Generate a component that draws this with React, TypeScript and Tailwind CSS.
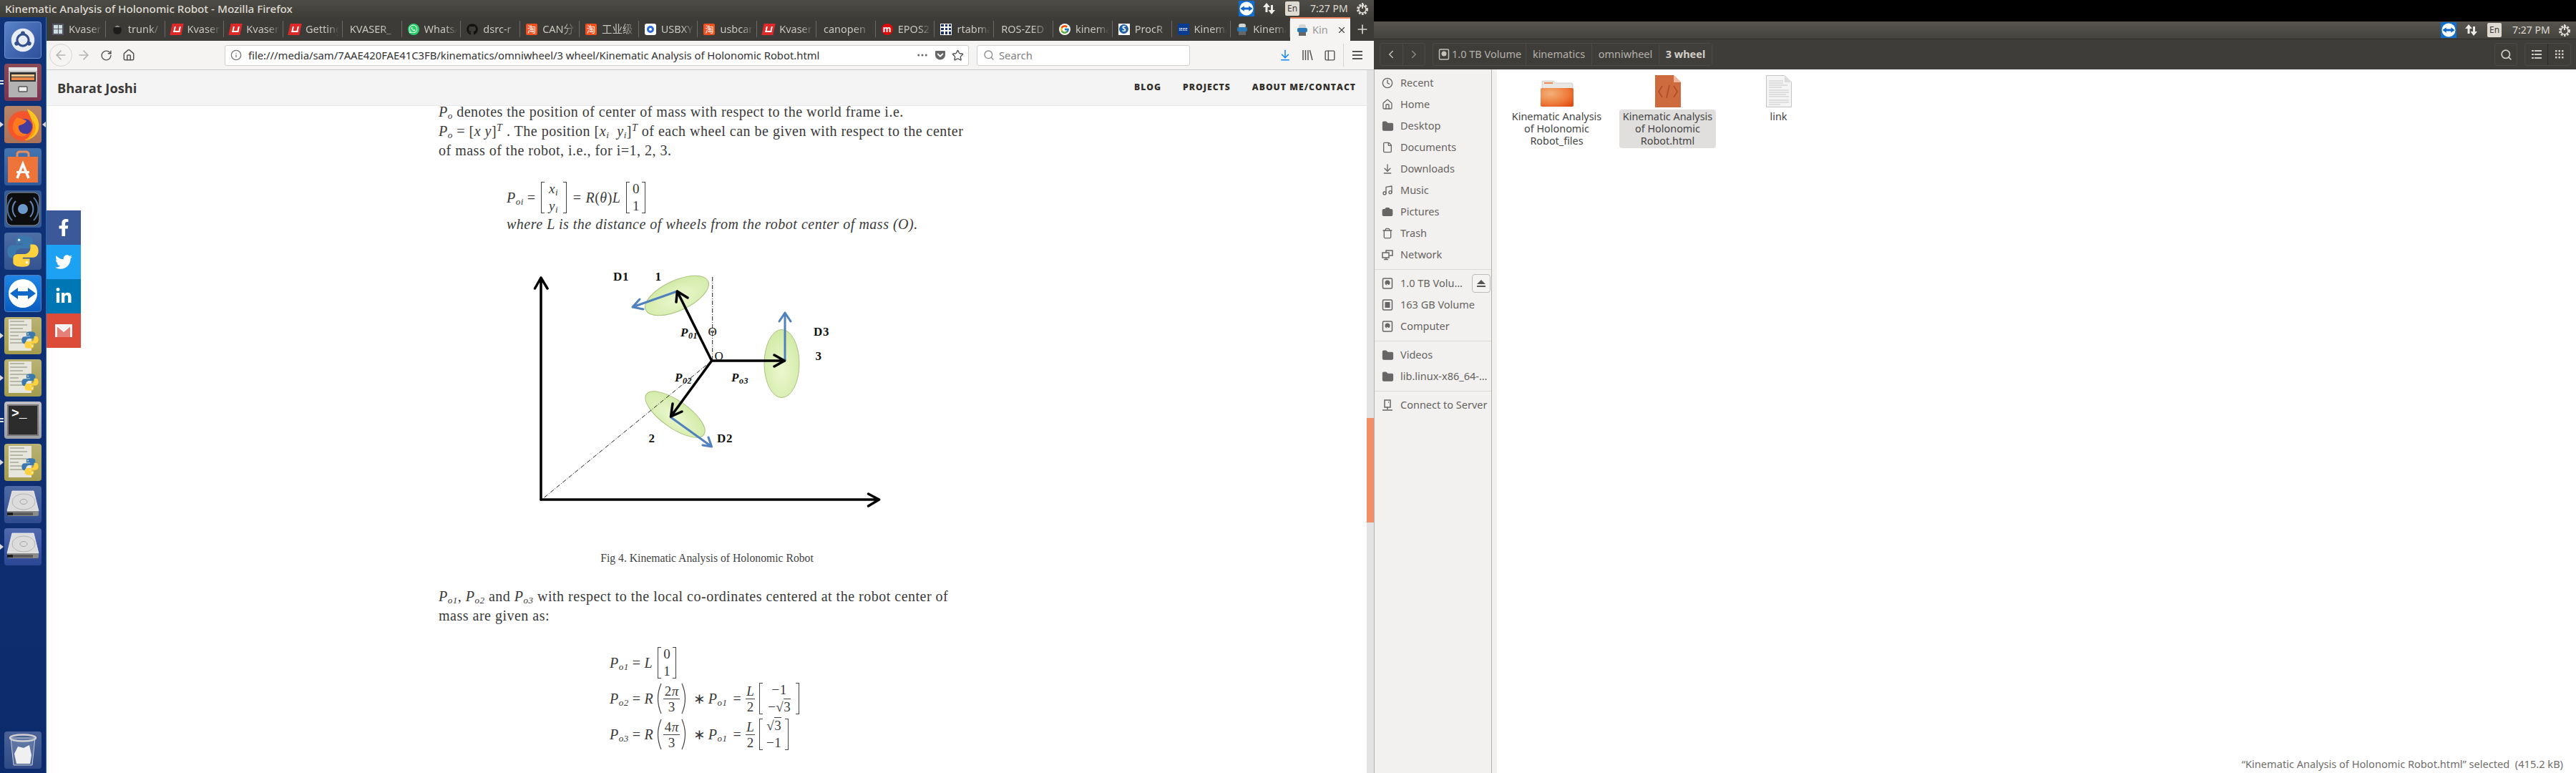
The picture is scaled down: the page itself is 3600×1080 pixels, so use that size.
import React from "react";
import { ArrowLeft, ArrowRight, RotateCw, House, Info, Star, Search, ArrowDownToLine, PanelLeft, Plus, X, Clock, Folder, File, Music, Camera, Trash, ChevronLeft, ChevronRight, Ellipsis } from "lucide-react";
import { FaFacebookF, FaTwitter, FaLinkedinIn, FaWhatsapp, FaGithub, FaGetPocket } from "react-icons/fa";
import { FcGoogle } from "react-icons/fc";

const SANS = "font-['Noto_Sans','Noto_Sans_CJK_SC',sans-serif]";

function Py({ s = 24, shift = false }: { s?: number; shift?: boolean }) {
  const d = "M11.9 2C7.4 2 7.6 4 7.6 5.2V7.2h4.5v.8H5.4C3.4 8 2 9.600 2 12.200s1.300 4.200 3.200 4.200h2v-2.600c0-2 1.700-3.600 3.700-3.600h4.500c1.700 0 2.900-1.300 2.900-2.900V5c0-1.600-1.400-3-5.400-3z";
  return (
    <svg width={s} height={s} viewBox="0 0 24 24" className={shift ? "absolute right-[2px] bottom-[6px]" : ""}>
      <path d={d} fill="#3a78ad" />
      <circle cx="9.500" cy="4.700" r=".8" fill="#e8f0f8" />
      <g transform="rotate(180 12 12)">
        <path d={d} fill="#fdd23e" />
        <circle cx="9.500" cy="4.700" r=".8" fill="#fff" />
      </g>
    </svg>
  );
}

function Tile({ className, children }: { className: string; children?: React.ReactNode }) {
  return <div className={`relative w-[52px] h-[52px] rounded-[4px] flex items-center justify-center overflow-hidden ${className}`}>{children}</div>;
}

function PyDoc() {
  return (
    <Tile className="bg-gradient-to-b from-[#b9b274] to-[#a39c4e]">
      <div className="absolute left-[6px] top-[3px] w-[32px] h-[44px] bg-[#e6e6dc] flex flex-col gap-[3px] p-[2px]">
        <div className="h-[2px] w-[20px] bg-[#b7b7a8]" /><div className="h-[2px] w-[24px] bg-[#b7b7a8]" /><div className="h-[2px] w-[18px] bg-[#b7b7a8]" />
        <div className="h-[2px] w-[24px] bg-[#b7b7a8]" /><div className="h-[2px] w-[12px] bg-[#b7b7a8]" /><div className="h-[2px] w-[22px] bg-[#b7b7a8]" /><div className="h-[2px] w-[26px] bg-[#b7b7a8]" />
      </div>
      <Py s={28} shift />
    </Tile>
  );
}

function Hdd({ className }: { className: string }) {
  return (
    <Tile className={className}>
      <svg width="48" height="42" viewBox="0 0 48 42">
        <path d="M9 2H39L46 30H2z" fill="#dcdcdc" stroke="#f4f4f4" strokeWidth=".8" />
        <path d="M2 30H46V35Q46 37 44 37H4Q2 37 2 35z" fill="#8a8a8a" />
        <rect x="8" y="32" width="30" height="4" fill="#5c5c5c" />
        <rect x="2" y="32" width="8" height="4" fill="#1d1d1d" />
        <ellipse cx="25" cy="17" rx="16" ry="11" fill="none" stroke="#b5b5b5" />
        <ellipse cx="25" cy="17" rx="5" ry="3.500" fill="none" stroke="#a3a3a3" />
      </svg>
    </Tile>
  );
}

const Pip = ({ kind }: { kind: "tri" | "dash" | "none" }) =>
  kind === "tri" ? (
    <div className="w-0 h-0 border-y-[4px] border-y-transparent border-l-[5px] border-l-[#d8d8d8]" />
  ) : kind === "dash" ? (
    <div className="flex flex-col gap-[2px]"><div className="w-[5px] h-[2px] bg-[#e0e0e0]" /><div className="w-[5px] h-[2px] bg-[#e0e0e0]" /></div>
  ) : null;

function LaunchItem({ pip = "none", children, right }: { pip?: "tri" | "dash" | "none"; children: React.ReactNode; right?: boolean }) {
  return (
    <div className="relative h-[52px] w-[65px] flex items-center">
      <div className="w-[6px] flex items-center"><Pip kind={pip} /></div>
      {children}
      {right && <div className="ml-[1px] w-0 h-0 border-y-[4px] border-y-transparent border-r-[5px] border-r-[#d8d8d8]" />}
    </div>
  );
}

function Launcher() {
  return (
    <aside className="w-[65px] shrink-0 bg-gradient-to-b from-[#0f3278] to-[#0c2b6c] border-r border-[#2a6ab8] flex flex-col pt-[6px] pb-[6px] gap-[7px]">
      <LaunchItem>
        <Tile className="bg-gradient-to-br from-[#5a83c8] to-[#2f4f9c] border border-[#6e92cc]">
          <svg width="34" height="40" viewBox="0 0 42 42">
            <circle cx="21" cy="21" r="20" fill="#e9eef6" />
            <circle cx="21" cy="21" r="10" fill="none" stroke="#33508f" strokeWidth="4" />
            <circle cx="21" cy="9" r="3.500" fill="#33508f" /><circle cx="10" cy="27" r="3.500" fill="#33508f" /><circle cx="32" cy="27" r="3.500" fill="#33508f" />
          </svg>
        </Tile>
      </LaunchItem>
      <LaunchItem pip="dash">
        <Tile className="bg-gradient-to-b from-[#8a4a56] to-[#7c3450]">
          <svg width="44" height="46" viewBox="0 0 44 46">
            <rect x="2" y="2" width="40" height="42" fill="#bdbdbd" rx="2" />
            <rect x="2" y="2" width="40" height="5" fill="#e4e4e4" />
            <rect x="4" y="9" width="36" height="13" fill="#333" />
            <rect x="6" y="12" width="32" height="3" fill="#f5c78e" /><rect x="6" y="16" width="32" height="4" fill="#e9894b" />
            <rect x="2" y="22" width="40" height="22" fill="#b2b2b2" />
            <rect x="16" y="29" width="12" height="7" rx="1" fill="#eee" stroke="#555" strokeWidth="1.500" />
          </svg>
        </Tile>
      </LaunchItem>
      <LaunchItem pip="tri" right>
        <Tile className="bg-gradient-to-b from-[#b78568] to-[#ab7258]">
          <svg width="48" height="48" viewBox="0 0 48 48">
            <circle cx="24" cy="26" r="21" fill="#f3552d" />
            <path d="M30 2C42 8 48 18 46 30 44 40 34 46 26 46 36 42 40 34 38 24 37 16 32 10 30 2z" fill="#ffc41f" />
            <path d="M38 18C42 24 44 32 38 39 34 44 30 45 26 46 34 42 40 32 38 18z" fill="#ff9a18" />
            <circle cx="26" cy="27" r="11" fill="#463c9e" />
            <path d="M16 14C20 16 26 16 29 19 26 24 21 24 18 26 17 32 22 38 30 37 24 44 12 40 10 30 9 24 12 18 16 14z" fill="#ff7a1f" />
          </svg>
        </Tile>
      </LaunchItem>
      <LaunchItem>
        <Tile className="bg-gradient-to-b from-[#4474ae] to-[#315c9c]">
          <svg width="42" height="46" viewBox="0 0 42 46">
            <path d="M13 12V6Q13 2 17 2H25Q29 2 29 6V12" fill="none" stroke="#e88c5c" strokeWidth="3" />
            <rect x="0" y="9" width="42" height="36" fill="#ee7439" />
            <path d="M13 39L21 19 29 39" fill="none" stroke="#fff" strokeWidth="3.500" />
            <rect x="12" y="29" width="18" height="3" fill="#fff" />
          </svg>
        </Tile>
      </LaunchItem>
      <LaunchItem>
        <Tile className="bg-[#385c96]">
          <svg width="50" height="50" viewBox="0 0 50 50">
            <rect x="2" y="2" width="46" height="46" rx="8" fill="#0d0d0d" stroke="#8c8c8c" />
            <circle cx="25" cy="25" r="7" fill="#6d98cc" />
            <path d="M15 14A16 16 0 0 0 15 36M35 14A16 16 0 0 1 35 36" fill="none" stroke="#5f87b8" strokeWidth="2" />
            <path d="M10 9A23 23 0 0 0 10 41M40 9A23 23 0 0 1 40 41" fill="none" stroke="#4d729f" strokeWidth="2" />
          </svg>
        </Tile>
      </LaunchItem>
      <LaunchItem>
        <Tile className="bg-gradient-to-b from-[#4e6ea6] to-[#33528f]"><Py s={60} /></Tile>
      </LaunchItem>
      <LaunchItem>
        <Tile className="bg-gradient-to-b from-[#1f86e6] to-[#0a5cc0] border border-[#4d7fc4]">
          <svg width="42" height="42" viewBox="0 0 42 42">
            <circle cx="21" cy="21" r="20" fill="#fff" />
            <path d="M3 21L14 13V18H28V13L39 21 28 29V24H14V29z" fill="#0e68c9" />
          </svg>
        </Tile>
      </LaunchItem>
      <LaunchItem pip="tri"><PyDoc /></LaunchItem>
      <LaunchItem pip="tri"><PyDoc /></LaunchItem>
      <LaunchItem pip="dash">
        <Tile className="bg-gradient-to-b from-[#c0c0c4] to-[#9ea0a6]">
          <div className="w-[44px] h-[44px] bg-[#2c2c2c] border-2 border-[#777] text-white text-[18px] leading-none font-bold font-['Liberation_Mono',monospace] pt-[2px] pl-[4px]">&gt;_</div>
        </Tile>
      </LaunchItem>
      <LaunchItem pip="tri"><PyDoc /></LaunchItem>
      <LaunchItem><Hdd className="bg-gradient-to-b from-[#4f6ba6] to-[#2f4c90]" /></LaunchItem>
      <LaunchItem pip="tri"><Hdd className="bg-gradient-to-b from-[#5069b0] to-[#2b4795]" /></LaunchItem>
      <div className="flex-1" />
      <LaunchItem>
        <Tile className="bg-gradient-to-b from-[#4a6298] to-[#2f4a86]">
          <svg width="38" height="46" viewBox="0 0 38 46">
            <path d="M2 6L6 44H32L36 6z" fill="#7b8fb5" fillOpacity=".5" stroke="#c8ccd4" />
            <ellipse cx="19" cy="6" rx="18" ry="4.500" fill="none" stroke="#d0d0d0" strokeWidth="2.500" />
            <path d="M7 28L12 18 20 20 28 16 31 30 29 42H10z" fill="#f0f0f0" />
          </svg>
        </Tile>
      </LaunchItem>
    </aside>
  );
}

function PowerGear() {
  return (
    <svg width="20" height="20" viewBox="0 0 20 20" fill="none" stroke="#dfdbd2">
      <circle cx="10" cy="11" r="6.500" strokeWidth="3" strokeDasharray="2.500 1.700" />
      <circle cx="10" cy="11" r="5" strokeWidth="1.500" />
      <path d="M10 2V10" strokeWidth="2" />
    </svg>
  );
}

function Indicators() {
  return (
    <div className={`flex items-center pr-[6px] ${SANS}`}>
      <div className="w-[22px] h-[22px] bg-[#0e6fd0] flex items-center justify-center">
        <svg width="20" height="20" viewBox="0 0 42 42"><circle cx="21" cy="21" r="20" fill="#fff" /><path d="M3 21L14 13V18H28V13L39 21 28 29V24H14V29z" fill="#0e68c9" /></svg>
      </div>
      <div className="ml-[10px] w-[22px] flex justify-center">
        <svg width="20" height="20" viewBox="0 0 20 20" fill="#efece6"><path d="M6 2L1 8H4.500V15H7.500V8H11zM13 18L18 12H15V5H12V12H8.500z" /></svg>
      </div>
      <div className="ml-[11px] w-[20px] h-[20px] rounded-[2px] bg-[#dfdbd2] text-[#3c3b37] text-[12px] leading-[20px] text-center">En</div>
      <div className="ml-[15px] w-[52px] text-[14px] leading-[20px] text-[#dfdbd2] whitespace-nowrap">7:27 PM</div>
      <div className="ml-[11px] w-[20px]"><PowerGear /></div>
    </div>
  );
}

function Kv() {
  return (
    <div className="w-[16px] h-[16px] bg-[#e02a2a] -skew-x-12 flex items-center justify-center">
      <div className="w-[9px] h-[8px] border-2 border-t-0 border-white" />
    </div>
  );
}
const Tao = () => <div className="w-[16px] h-[16px] rounded-[2px] bg-[#f4511e] text-white text-[12px] leading-[16px] text-center font-['Noto_Sans_CJK_SC',sans-serif]">淘</div>;
const RobotIco = () => (
  <svg width="16" height="18" viewBox="0 0 16 18">
    <rect x="3" y="1" width="10" height="6" rx="3" fill="#d4d4d4" /><rect x="1" y="6" width="14" height="6" rx="2" fill="#2b78b8" /><rect x="3" y="12" width="10" height="5" fill="#666" />
  </svg>
);
const tabs: { t: string; i?: React.ReactNode }[] = [
  { t: "Kvaser", i: <div className="w-[16px] h-[16px] bg-[#556] grid grid-cols-2 gap-[1px] p-[2px]"><div className="bg-[#cdd]" /><div className="bg-[#cdd]" /><div className="bg-[#cdd]" /><div className="bg-[#cdd]" /></div> },
  { t: "trunk/", i: <svg width="16" height="16" viewBox="0 0 16 16"><circle cx="8" cy="9" r="6" fill="#1c1c1c" /><path d="M4 5Q8 0 12 5" fill="#888" /></svg> },
  { t: "Kvaser", i: <Kv /> },
  { t: "Kvaser", i: <Kv /> },
  { t: "Getting", i: <Kv /> },
  { t: "KVASER_" },
  { t: "WhatsApp", i: <div className="w-[16px] h-[16px] rounded-full bg-[#25d366] flex items-center justify-center"><FaWhatsapp size={13} color="#fff" /></div> },
  { t: "dsrc-r", i: <FaGithub size={16} color="#111" /> },
  { t: "CAN分析", i: <Tao /> },
  { t: "工业级", i: <Tao /> },
  { t: "USBXY", i: <div className="w-[16px] h-[16px] rounded-[3px] bg-white flex items-center justify-center"><div className="w-[10px] h-[10px] rounded-full border-[3px] border-[#2a6ae0]" /></div> },
  { t: "usbcan", i: <Tao /> },
  { t: "Kvaser", i: <Kv /> },
  { t: "canopen" },
  { t: "EPOS2", i: <div className="w-[16px] h-[16px] rounded-full bg-[#e10a0a] text-white text-[12px] leading-[15px] text-center font-bold">m</div> },
  { t: "rtabmap", i: <div className="w-[16px] h-[16px] bg-white grid grid-cols-3 gap-[2px] p-[1px]">{Array.from({ length: 9 }).map((_, n) => <div key={n} className="bg-[#1d2f6a]" />)}</div> },
  { t: "ROS-ZED" },
  { t: "kinemat", i: <div className="w-[16px] h-[16px] rounded-full bg-white flex items-center justify-center"><FcGoogle size={14} /></div> },
  { t: "ProcR", i: <div className="w-[16px] h-[16px] bg-white flex items-center justify-center"><div className="w-[13px] h-[13px] rounded-full bg-[#1d5fa8] text-white text-[10px] leading-[13px] text-center font-bold">S</div></div> },
  { t: "Kinemat", i: <div className="w-[16px] h-[16px] bg-[#0a3d91] text-white text-[6px] leading-[16px] text-center">IEEE</div> },
  { t: "Kinemat", i: <RobotIco /> },
];

function Tabs() {
  return (
    <div className={`h-[33px] bg-[#3c3b37] flex items-stretch ${SANS}`}>
      <div className="flex-1 flex min-w-0">
        {tabs.map((x, n) => (
          <div key={n} className="flex-1 min-w-0 flex items-center pl-[8px] pr-[5px] gap-[7px] overflow-hidden relative after:absolute after:right-0 after:top-[5px] after:bottom-[5px] after:w-px after:bg-[#6a6963]">
            {x.i && <div className="shrink-0">{x.i}</div>}
            <div className={`text-[14.500px] text-[#c9c6be] whitespace-nowrap overflow-hidden flex-1 [mask-image:linear-gradient(to_right,#000_65%,transparent)] ${x.i ? "" : "pl-[2px]"}`}>{x.t}</div>
          </div>
        ))}
        <div className="flex-1 min-w-0 bg-[#f5f4f3] border-t-2 border-[#e9845c] flex items-center pl-[9px] pr-[5px] gap-[6px]">
          <div className="shrink-0"><RobotIco /></div>
          <div className="text-[14.500px] text-[#9a9a98] whitespace-nowrap overflow-hidden flex-1">Kin</div>
          <X size={14} className="text-[#444] shrink-0" />
        </div>
      </div>
      <div className="w-[33px] flex items-center justify-center"><Plus size={20} className="text-[#d8d5ce]" /></div>
    </div>
  );
}

function Toolbar() {
  return (
    <div className={`h-[41px] bg-[#f5f4f3] border-b border-[#c9c9c7] flex items-center pl-[4px] ${SANS}`}>
      <div className="w-[32px] h-[32px] rounded-full border border-[#d6d6d4] flex items-center justify-center"><ArrowLeft size={20} className="text-[#b4b4b2]" /></div>
      <ArrowRight size={20} className="ml-[6px] text-[#b4b4b2]" />
      <RotateCw size={17} className="ml-[13px] text-[#555]" />
      <House size={18} className="ml-[14px] text-[#555]" />
      <div className="ml-[125px] w-[1040px] h-[29px] bg-white border border-[#cfcfcd] rounded-[3px] flex items-center pl-[7px] pr-[6px]">
        <Info size={16} className="text-[#777]" />
        <span className="ml-[9px] text-[14.800px] text-[#333] whitespace-nowrap">file:///media/sam/7AAE420FAE41C3FB/kinematics/omniwheel/3 wheel/Kinematic Analysis of Holonomic Robot.html</span>
        <div className="flex-1" />
        <Ellipsis size={18} className="text-[#666]" />
        <FaGetPocket size={16} className="ml-[8px] text-[#666]" />
        <Star size={17} className="ml-[8px] text-[#555]" />
      </div>
      <div className="ml-[11px] w-[298px] h-[29px] bg-white border border-[#cfcfcd] rounded-[3px] flex items-center pl-[8px]">
        <Search size={16} className="text-[#888]" />
        <span className="ml-[6px] text-[14.800px] text-[#808080]">Search</span>
      </div>
      <ArrowDownToLine size={18} className="ml-[124px] text-[#0a84ff]" />
      <svg width="18" height="18" viewBox="0 0 18 18" className="ml-[13px]" fill="none" stroke="#555" strokeWidth="1.500"><path d="M3 2V16M6.500 2V16M10 2V16M12.500 2L16 16" /></svg>
      <PanelLeft size={17} className="ml-[14px] text-[#555]" />
      <div className="ml-[10px] w-px h-[32px] bg-[#d4d4d2]" />
      <svg width="16" height="16" viewBox="0 0 16 16" className="ml-[11px]" fill="#555"><rect x="1" y="2" width="14" height="2" /><rect x="1" y="7" width="14" height="2" /><rect x="1" y="12" width="14" height="2" /></svg>
    </div>
  );
}

const Sub = ({ b, s }: { b: string; s: string }) => (
  <span className="italic whitespace-nowrap">{b}<sub className="text-[13px] italic">{s}</sub></span>
);

function Mat({ className, a, b }: { className: string; a: React.ReactNode; b: React.ReactNode }) {
  return (
    <span className={`flex h-[44px] ${className}`}>
      <span className="w-[5px] border-l border-y border-[#444]" />
      <span className="flex-1 flex flex-col items-center justify-between leading-[20px] text-[19px]">
        <span>{a}</span><span>{b}</span>
      </span>
      <span className="w-[5px] border-r border-y border-[#444]" />
    </span>
  );
}

const Paren = ({ flip }: { flip?: boolean }) => (
  <svg width="10" height="44" viewBox="0 0 10 44" fill="none" stroke="#444" strokeWidth="1.200"><path d={flip ? "M1 1Q10 22 1 43" : "M9 1Q0 22 9 43"} /></svg>
);

const Frac = ({ a, b, className }: { a: React.ReactNode; b: React.ReactNode; className: string }) => (
  <span className={`flex flex-col items-center text-[19px] leading-[21px] ${className}`}>
    <span className="border-b border-[#444] w-full text-center">{a}</span>
    <span>{b}</span>
  </span>
);
const Sq = () => <span className="whitespace-nowrap">√<span className="border-t border-[#444]">3</span></span>;

function WheelFig() {
  const T = "font-['Liberation_Serif',serif]";
  return (
    <svg width="560" height="370" viewBox="0 0 560 370" className="ml-[87px] block">
      <defs>
        <radialGradient id="g" cx=".5" cy=".6" r=".7"><stop offset="0" stopColor="#ecf7cf" /><stop offset="1" stopColor="#cde8a0" /></radialGradient>
      </defs>
      <ellipse cx="246" cy="63" rx="48" ry="21" transform="rotate(-25 246 63)" fill="url(#g)" stroke="#a9c27c" />
      <ellipse cx="243.500" cy="229" rx="49" ry="19" transform="rotate(35 243.500 229)" fill="url(#g)" stroke="#a9c27c" />
      <ellipse cx="392.500" cy="158" rx="24.500" ry="47.500" fill="url(#g)" stroke="#a9c27c" />
      <g fill="none" stroke="#222" strokeWidth="1" strokeDasharray="6 2 1 2">
        <path d="M295.700 37V154" /><path d="M60.700 345L294.600 154" />
      </g>
      <g fill="none" stroke="#4f81bd" strokeWidth="3" strokeLinecap="round" strokeLinejoin="round">
        <path d="M246.400 57L184 79M194 68L184 79 199 82" />
        <path d="M237.500 233L294.600 274M282 272L294.600 274 290 261" />
        <path d="M397 154V87M389 99L397 87 405 99" />
      </g>
      <g fill="none" stroke="#000" strokeLinecap="round" strokeLinejoin="round">
        <path d="M56 348V38M47.500 53L56 38 65 53" strokeWidth="3.500" />
        <path d="M56 348H528.600M513.500 340L528.600 348 513.500 357" strokeWidth="3.500" />
        <path d="M294.600 154L246.400 57M245 72L246.400 57 261 66M294.600 154L237.500 232M253 225L237.500 232 240 214M294.600 154H396.400M382 146L396.400 154 382 162" strokeWidth="3.500" />
      </g>
      <g className={T} fontSize="17" fontWeight="700" fill="#111" textAnchor="middle">
        <text x="168" y="42">D1</text><text x="220" y="42">1</text>
        <text x="313" y="268">D2</text><text x="211" y="268">2</text>
        <text x="448" y="119">D3</text><text x="444" y="153">3</text>
      </g>
      <g className={T} fontSize="17" fill="#111" textAnchor="middle">
        <text x="296" y="119">Θ</text><text x="305" y="153">O</text>
      </g>
      <g className={T} fontSize="17" fontWeight="700" fontStyle="italic" fill="#111">
        <text x="251" y="120">P<tspan fontSize="12" dy="3">01</tspan></text>
        <text x="243" y="183">P<tspan fontSize="12" dy="3">02</tspan></text>
        <text x="322" y="183">P<tspan fontSize="12" dy="3">o3</tspan></text>
      </g>
    </svg>
  );
}

function Article() {
  return (
    <div className="-mt-[5px] ml-[548px] w-[750px] font-['Liberation_Serif',serif] text-[20px] leading-[27px] text-[#3a3a3a] tracking-[0.5px]">
      <p><Sub b="P" s="o" /> denotes the position of center of mass with respect to the world frame i.e.</p>
      <p><Sub b="P" s="o" /> = [<i>x y</i>]<sup className="italic text-[14px]">T</sup> . The position [<i>x<sub className="text-[13px]">i</sub>&nbsp; y<sub className="text-[13px]">i</sub></i>]<sup className="italic text-[14px]">T</sup> of each wheel can be given with respect to the center</p>
      <p>of mass of the robot, i.e., for i=1, 2, 3.</p>
      <div className="mt-[30px] ml-[95px] flex items-center h-[44px] text-[20px]">
        <Sub b="P" s="oi" /><span className="ml-[5px]">=</span>
        <Mat className="ml-[7px] w-[36px] italic" a={<>x<sub className="text-[13px]">i</sub></>} b={<>y<sub className="text-[13px]">i</sub></>} />
        <span className="ml-[9px]">=</span><span className="ml-[6px] whitespace-nowrap"><i>R</i>(<i>θ</i>)<i>L</i></span>
        <Mat className="ml-[8px] w-[27px]" a="0" b="1" />
      </div>
      <p className="mt-[2px] ml-[95px] italic">where L is the distance of wheels from the robot center of mass (O).</p>
      <div className="mt-[23px]"><WheelFig /></div>
      <p className="mt-[50px] text-center text-[15.700px] leading-[20px] tracking-normal text-[#444] w-[750px]">Fig 4. Kinematic Analysis of Holonomic Robot</p>
      <div className="mt-[30px] w-[732px]">
        <Sub b="P" s="o1" />, <Sub b="P" s="o2" /> and <Sub b="P" s="o3" /> with respect to the local co-ordinates centered at the robot center of mass are given as:
      </div>
      <div className="mt-[30px] ml-[239px] flex flex-col gap-[6px] text-[20px]">
        <div className="flex items-center h-[44px]">
          <Sub b="P" s="o1" /><span className="ml-[5px]">=</span><i className="ml-[5px]">L</i>
          <Mat className="ml-[7px] w-[26px]" a="0" b="1" />
        </div>
        <div className="flex items-center h-[44px]">
          <Sub b="P" s="o2" /><span className="ml-[5px]">=</span><i className="ml-[5px]">R</i>
          <span className="ml-[2px]"><Paren /></span>
          <Frac className="w-[23px] mx-[2px]" a={<>2<i>π</i></>} b="3" />
          <Paren flip />
          <span className="ml-[7px]">∗</span><span className="ml-[3px]"><Sub b="P" s="o1" /></span><span className="ml-[8px]">=</span>
          <Frac className="ml-[6px] w-[13px]" a={<i>L</i>} b="2" />
          <Mat className="ml-[6px] w-[56px]" a="−1" b={<>−<Sq /></>} />
        </div>
        <div className="flex items-center h-[44px]">
          <Sub b="P" s="o3" /><span className="ml-[5px]">=</span><i className="ml-[5px]">R</i>
          <span className="ml-[2px]"><Paren /></span>
          <Frac className="w-[23px] mx-[2px]" a={<>4<i>π</i></>} b="3" />
          <Paren flip />
          <span className="ml-[7px]">∗</span><span className="ml-[3px]"><Sub b="P" s="o1" /></span><span className="ml-[8px]">=</span>
          <Frac className="ml-[6px] w-[13px]" a={<i>L</i>} b="2" />
          <Mat className="ml-[6px] w-[41px]" a={<Sq />} b="−1" />
        </div>
      </div>
    </div>
  );
}

function Firefox() {
  return (
    <div className="flex-1 min-w-0 flex flex-col">
      <Tabs />
      <Toolbar />
      <div className="flex-1 flex min-h-0">
        <div className="relative flex-1 min-w-0 flex flex-col overflow-hidden bg-white">
          <header className="relative z-10 h-[50px] shrink-0 bg-[#f4f4f4] border-b border-[#e8e8e8] flex items-center pl-[15px] pr-[15px] font-['Open_Sans',sans-serif]">
            <div className="text-[18.300px] font-bold text-[#3d3a36]">Bharat Joshi</div>
            <div className="flex-1" />
            <nav className="flex gap-[30px] text-[12.200px] font-extrabold tracking-[1px] text-[#33302c]">
              <span>BLOG</span><span>PROJECTS</span><span>ABOUT ME/CONTACT</span>
            </nav>
          </header>
          <div className="flex-1 overflow-hidden"><Article /></div>
          <div className="absolute left-0 top-[196px] z-20 w-[48px] flex flex-col">
            <div className="h-[48px] bg-[#3b5998] flex items-center justify-center"><FaFacebookF size={24} color="#fff" /></div>
            <div className="h-[48px] bg-[#1da1f2] flex items-center justify-center"><FaTwitter size={24} color="#fff" /></div>
            <div className="h-[48px] bg-[#0077b5] flex items-center justify-center"><FaLinkedinIn size={24} color="#fff" /></div>
            <div className="h-[48px] bg-[#dd4b39] flex items-center justify-center">
              <svg width="24" height="18" viewBox="0 0 24 18"><rect width="24" height="18" fill="#f3f3f3" /><path d="M3 0L12 8 21 0V18H3z" fill="#e58078" /><path d="M0 0H3L12 8 21 0H24V1L12 11 0 1z" fill="#fff" /></svg>
            </div>
          </div>
        </div>
        <div className="w-[10px] shrink-0 bg-[#e3e3e3]"><div className="mt-[486px] h-[146px] bg-[#f28f68]" /></div>
      </div>
    </div>
  );
}

const SIco = ({ children }: { children: React.ReactNode }) => <div className="w-[18px] flex justify-center text-[#666]">{children}</div>;
const Disk = () => (
  <svg width="16" height="16" viewBox="0 0 16 16" fill="none" stroke="#666" strokeWidth="1.500"><rect x="1.500" y="1" width="13" height="14" rx="1.500" /><circle cx="8" cy="7" r="3.500" fill="#666" stroke="none" /><path d="M7 9L11 12" stroke="#f2f1f0" /></svg>
);
const FolderF = () => <Folder size={17} fill="#666" strokeWidth={1.500} />;

function SRow({ icon, t, children }: { icon: React.ReactNode; t: string; children?: React.ReactNode }) {
  return (
    <div className="h-[30px] flex items-center pl-[9px]">
      <SIco>{icon}</SIco>
      <span className="ml-[9px] text-[14.500px] text-[#66645f] whitespace-nowrap">{t}</span>
      {children}
    </div>
  );
}
const Sep = () => <div className="h-[10px] flex items-center"><div className="w-full h-px bg-[#dcdad7]" /></div>;

function Sidebar() {
  return (
    <div className="w-[165px] shrink-0 bg-[#f2f1f0] border-l border-r border-[#b3b1ae] pt-[4px]">
      <SRow icon={<Clock size={16} />} t="Recent" />
      <SRow icon={<House size={16} />} t="Home" />
      <SRow icon={<FolderF />} t="Desktop" />
      <SRow icon={<File size={16} />} t="Documents" />
      <SRow icon={<ArrowDownToLine size={16} />} t="Downloads" />
      <SRow icon={<Music size={16} />} t="Music" />
      <SRow icon={<Camera size={16} fill="#666" stroke="#666" />} t="Pictures" />
      <SRow icon={<Trash size={16} />} t="Trash" />
      <SRow icon={<svg width="16" height="16" viewBox="0 0 16 16" fill="none" stroke="#666" strokeWidth="1.500"><rect x="1" y="5" width="9" height="7" /><path d="M3 14.500H9M6 12V14" /><path d="M6 5V2H15V9H11" /></svg>} t="Network" />
      <Sep />
      <SRow icon={<Disk />} t="1.0 TB Volu…">
        <div className="ml-auto mr-[1px] w-[26px] h-[26px] rounded-[4px] border border-[#bdbbb8] bg-[#f4f3f2] flex flex-col items-center justify-center gap-[2px]">
          <div className="w-0 h-0 border-x-[6px] border-x-transparent border-b-[6px] border-b-[#555]" /><div className="w-[12px] h-[2px] bg-[#555]" />
        </div>
      </SRow>
      <SRow icon={<svg width="16" height="16" viewBox="0 0 16 16" fill="none" stroke="#666" strokeWidth="1.500"><rect x="1.500" y="1" width="13" height="14" rx="1.500" /><rect x="4.500" y="4" width="7" height="8" fill="#666" stroke="none" /></svg>} t="163 GB Volume" />
      <SRow icon={<Disk />} t="Computer" />
      <Sep />
      <SRow icon={<FolderF />} t="Videos" />
      <SRow icon={<FolderF />} t="lib.linux-x86_64-…" />
      <Sep />
      <SRow icon={<svg width="16" height="16" viewBox="0 0 16 16" fill="none" stroke="#666" strokeWidth="1.500"><rect x="4" y="1" width="8" height="10" /><path d="M8 11V14M1 15H15" /><path d="M9 4H10" /></svg>} t="Connect to Server" />
    </div>
  );
}

function FileItem({ icon, lines, sel }: { icon: React.ReactNode; lines: string[]; sel?: boolean }) {
  return (
    <div className="w-[135px] flex flex-col items-center">
      <div className="h-[45px] mt-[8px] flex items-end">{icon}</div>
      <div className={`mt-[3px] w-full py-[1px] rounded-[4px] text-center text-[14.400px] leading-[17px] text-[#444] ${sel ? "bg-[#e0dfdd] h-[54px]" : ""}`}>
        {lines.map((l) => <div key={l}>{l}</div>)}
      </div>
    </div>
  );
}

function FilesWin() {
  return (
    <div className={`flex-1 min-w-0 flex flex-col bg-black ${SANS}`}>
      <div className="h-[30px] shrink-0" />
      <div className="h-[24px] shrink-0 bg-gradient-to-b from-[#56544d] to-[#45433e] flex justify-end items-center"><Indicators /></div>
      <div className="h-[43px] shrink-0 bg-[#3e3d39] border-t border-[#2d2c29] flex items-center pl-[8px] pr-[7px]">
        <div className="w-[64px] h-[32px] rounded-[4px] border border-[#4c4b46] flex text-[#c4c1b9]">
          <div className="flex-1 flex items-center justify-center border-r border-[#4c4b46]"><ChevronLeft size={18} /></div>
          <div className="flex-1 flex items-center justify-center text-[#8b8981]"><ChevronRight size={18} /></div>
        </div>
        <div className="ml-[10px] h-[32px] rounded-[4px] border border-[#4c4b46] flex items-center text-[14.500px] text-[#b5b2a9]">
          <div className="w-[130px] h-full flex items-center pl-[7px] border-r border-[#4c4b46]">
            <svg width="16" height="18" viewBox="0 0 16 16" fill="none" stroke="#c4c1b9" strokeWidth="1.500"><rect x="1.500" y="1" width="13" height="14" rx="1.500" /><circle cx="8" cy="7" r="3.500" fill="#c4c1b9" stroke="none" /></svg>
            <span className="ml-[3px] whitespace-nowrap">1.0 TB Volume</span>
          </div>
          <div className="w-[92px] h-full flex items-center justify-center border-r border-[#4c4b46]">kinematics</div>
          <div className="w-[94px] h-full flex items-center justify-center border-r border-[#4c4b46]">omniwheel</div>
          <div className="w-[73px] h-full flex items-center justify-center font-bold text-[#d3d0c8] bg-[#413f3b]">3 wheel</div>
        </div>
        <div className="flex-1" />
        <div className="w-[32px] h-[32px] rounded-[4px] border border-[#4c4b46] flex items-center justify-center"><Search size={17} className="text-[#cfccc4]" strokeWidth={2.500} /></div>
        <div className="ml-[10px] w-[65px] h-[32px] rounded-[4px] border border-[#4c4b46] flex">
          <div className="flex-1 flex items-center justify-center">
            <svg width="14" height="12" viewBox="0 0 14 12" fill="#cfccc4"><rect width="3" height="2" /><rect x="4" width="10" height="2" /><rect y="5" width="3" height="2" /><rect x="4" y="5" width="10" height="2" /><rect y="10" width="3" height="2" /><rect x="4" y="10" width="10" height="2" /></svg>
          </div>
          <div className="flex-1 flex items-center justify-center border-l border-[#2d2c29]">
            <svg width="12" height="12" viewBox="0 0 12 12" fill="#cfccc4"><rect width="2.500" height="2.500" /><rect x="4.500" width="2.500" height="2.500" /><rect x="9" width="2.500" height="2.500" /><rect y="4.500" width="2.500" height="2.500" /><rect x="4.500" y="4.500" width="2.500" height="2.500" /><rect x="9" y="4.500" width="2.500" height="2.500" /><rect y="9" width="2.500" height="2.500" /><rect x="4.500" y="9" width="2.500" height="2.500" /><rect x="9" y="9" width="2.500" height="2.500" /></svg>
          </div>
        </div>
      </div>
      <div className="flex-1 flex min-h-0 bg-white">
        <Sidebar />
        <div className="w-[7px] shrink-0 bg-[#f2f1f0]" />
        <div className="flex-1 flex flex-col min-w-0">
          <div className="flex-1 flex gap-[20px] pl-[16px]">
            <FileItem lines={["Kinematic Analysis", "of Holonomic", "Robot_files"]} icon={
              <svg width="46" height="38" viewBox="0 0 46 38">
                <defs><radialGradient id="fo" cx=".3" cy=".3" r=".9"><stop offset="0" stopColor="#f3b27a" /><stop offset=".6" stopColor="#ee7b3a" /><stop offset="1" stopColor="#df4a10" /></radialGradient></defs>
                <path d="M2 10V2Q2 1 3 1H18L21 4H43Q45 4 45 6V12H2z" fill="#e9e7e3" stroke="#bdbab5" strokeWidth=".6" />
                <rect x="5" y="3" width="12" height="2" fill="#ee8a52" />
                <rect x="0" y="11" width="46" height="26" rx="2" fill="url(#fo)" />
              </svg>} />
            <FileItem sel lines={["Kinematic Analysis", "of Holonomic", "Robot.html"]} icon={
              <svg width="36" height="45" viewBox="0 0 36 45">
                <path d="M0 0H26L36 10V45H0z" fill="#cd6a3e" />
                <path d="M26 0L36 10H26z" fill="#f0b79b" />
                <path d="M10 15L5 23 10 31M26 15L31 23 26 31M20 14L16 32" fill="none" stroke="#a84d27" strokeWidth="1.500" />
              </svg>} />
            <FileItem lines={["link"]} icon={
              <svg width="36" height="45" viewBox="0 0 36 45">
                <path d="M.5 .5H26L35.500 10V44.500H.5z" fill="#f4f4f4" stroke="#c4c4c4" />
                <path d="M26 .5L35.500 10H26z" fill="#dcdcdc" />
                <path d="M4 8H24M4 11H24M4 14H30M4 17H22M4 21H32M4 24H32M4 27H28M4 30H32M4 35H32M4 38H32M4 41H20" stroke="#c8c8c8" />
              </svg>} />
          </div>
          <div className="h-[26px] shrink-0 pr-[18px] text-right text-[14.600px] leading-[26px] text-[#6f6e6a] whitespace-pre">“Kinematic Analysis of Holonomic Robot.html” selected  (415.2 kB)</div>
        </div>
      </div>
    </div>
  );
}

export default function App() {
  return (
    <div className="w-[3600px] h-[1080px] flex overflow-hidden bg-black">
      <div className="w-[1920px] shrink-0 flex flex-col">
        <div className={`h-[24px] shrink-0 bg-gradient-to-b from-[#4e4c46] to-[#3e3d38] flex items-center justify-between pl-[7px] ${SANS}`}>
          <span className="text-[15.200px] font-medium text-[#dfdbd2] whitespace-nowrap">Kinematic Analysis of Holonomic Robot - Mozilla Firefox</span>
          <Indicators />
        </div>
        <div className="flex-1 flex min-h-0">
          <Launcher />
          <Firefox />
        </div>
      </div>
      <FilesWin />
    </div>
  );
}
